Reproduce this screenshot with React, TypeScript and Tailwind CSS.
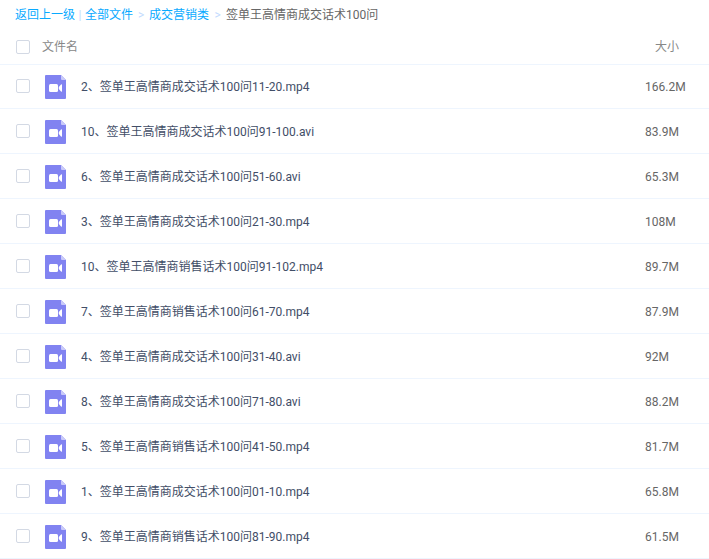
import React from "react";

const files = [
  { name: "2、签单王高情商成交话术100问11-20.mp4", size: "166.2M" },
  { name: "10、签单王高情商成交话术100问91-100.avi", size: "83.9M" },
  { name: "6、签单王高情商成交话术100问51-60.avi", size: "65.3M" },
  { name: "3、签单王高情商成交话术100问21-30.mp4", size: "108M" },
  { name: "10、签单王高情商销售话术100问91-102.mp4", size: "89.7M" },
  { name: "7、签单王高情商销售话术100问61-70.mp4", size: "87.9M" },
  { name: "4、签单王高情商成交话术100问31-40.avi", size: "92M" },
  { name: "8、签单王高情商成交话术100问71-80.avi", size: "88.2M" },
  { name: "5、签单王高情商销售话术100问41-50.mp4", size: "81.7M" },
  { name: "1、签单王高情商成交话术100问01-10.mp4", size: "65.8M" },
  { name: "9、签单王高情商销售话术100问81-90.mp4", size: "61.5M" },
];

const Checkbox = ({ id, label }: { id: string; label: string }) => (
  <input
    type="checkbox"
    id={id}
    aria-label={label}
    className="block size-3.5 appearance-none rounded-xs border border-[#d3d9e4] bg-white checked:bg-[#09aaff]"
  />
);

const VideoIcon = () => (
  <svg width="21" height="24" viewBox="0 0 21 24" className="block" aria-hidden="true">
    <path d="M1 0H16l5 5v18a1 1 0 0 1-1 1H1a1 1 0 0 1-1-1V1a1 1 0 0 1 1-1Z" fill="#8183f1" />
    <path d="M16 0l5 5h-4a1 1 0 0 1-1-1Z" fill="#c9caf9" />
    <rect x="4" y="9" width="9" height="8" rx="1.5" fill="#fff" />
    <path d="M13.8 12.1 16 9.6q1-.8 1 .4v6q0 1.2-1 .4l-2.2-2.5Z" fill="#fff" />
  </svg>
);

const Breadcrumb = () => (
  <nav className="flex h-[29px] items-center pl-[15px] whitespace-nowrap text-[#c4dbfe]">
    <a href="#up" className="text-[#09aaff]">
      返回上一级
    </a>
    <span className="w-2.5 text-center">|</span>
    <a href="#all" className="text-[#09aaff]">
      全部文件
    </a>
    <span className="w-4 text-center">&gt;</span>
    <a href="#sales" className="text-[#09aaff]">
      成交营销类
    </a>
    <span className="w-[17px] text-center">&gt;</span>
    <span className="text-[#666]">签单王高情商成交话术100问</span>
  </nav>
);

export default function App() {
  return (
    <main className="min-h-screen bg-white font-[Roboto,'Noto_Sans_CJK_SC',sans-serif] text-xs leading-4">
      <Breadcrumb />
      <table className="w-full table-fixed border-separate border-spacing-0 text-left">
        <thead>
          <tr className="h-[35px] shadow-[0_1px_0_#eef5fe]">
            <th className="w-[42px] p-0 pl-4">
              <Checkbox id="all" label="全选" />
            </th>
            <th className="p-0 font-normal text-[#888]">文件名</th>
            <th className="w-16 p-0 pl-2.5 font-normal text-[#888]">大小</th>
          </tr>
        </thead>
        <tbody>
          {files.map((file, i) => (
            <tr key={file.name} className="h-[45px] *:border-b *:border-[#eef5fe]">
              <td className="p-0 pl-4">
                <Checkbox id={`file-${i}`} label={file.name} />
              </td>
              <td className="p-0 text-[#424e67]">
                <label htmlFor={`file-${i}`} className="flex items-center gap-[15px] pt-0.5 pl-[3px]">
                  <VideoIcon />
                  {file.name}
                </label>
              </td>
              <td className="p-0 pt-0.5 text-[#666]">{file.size}</td>
            </tr>
          ))}
        </tbody>
      </table>
    </main>
  );
}
